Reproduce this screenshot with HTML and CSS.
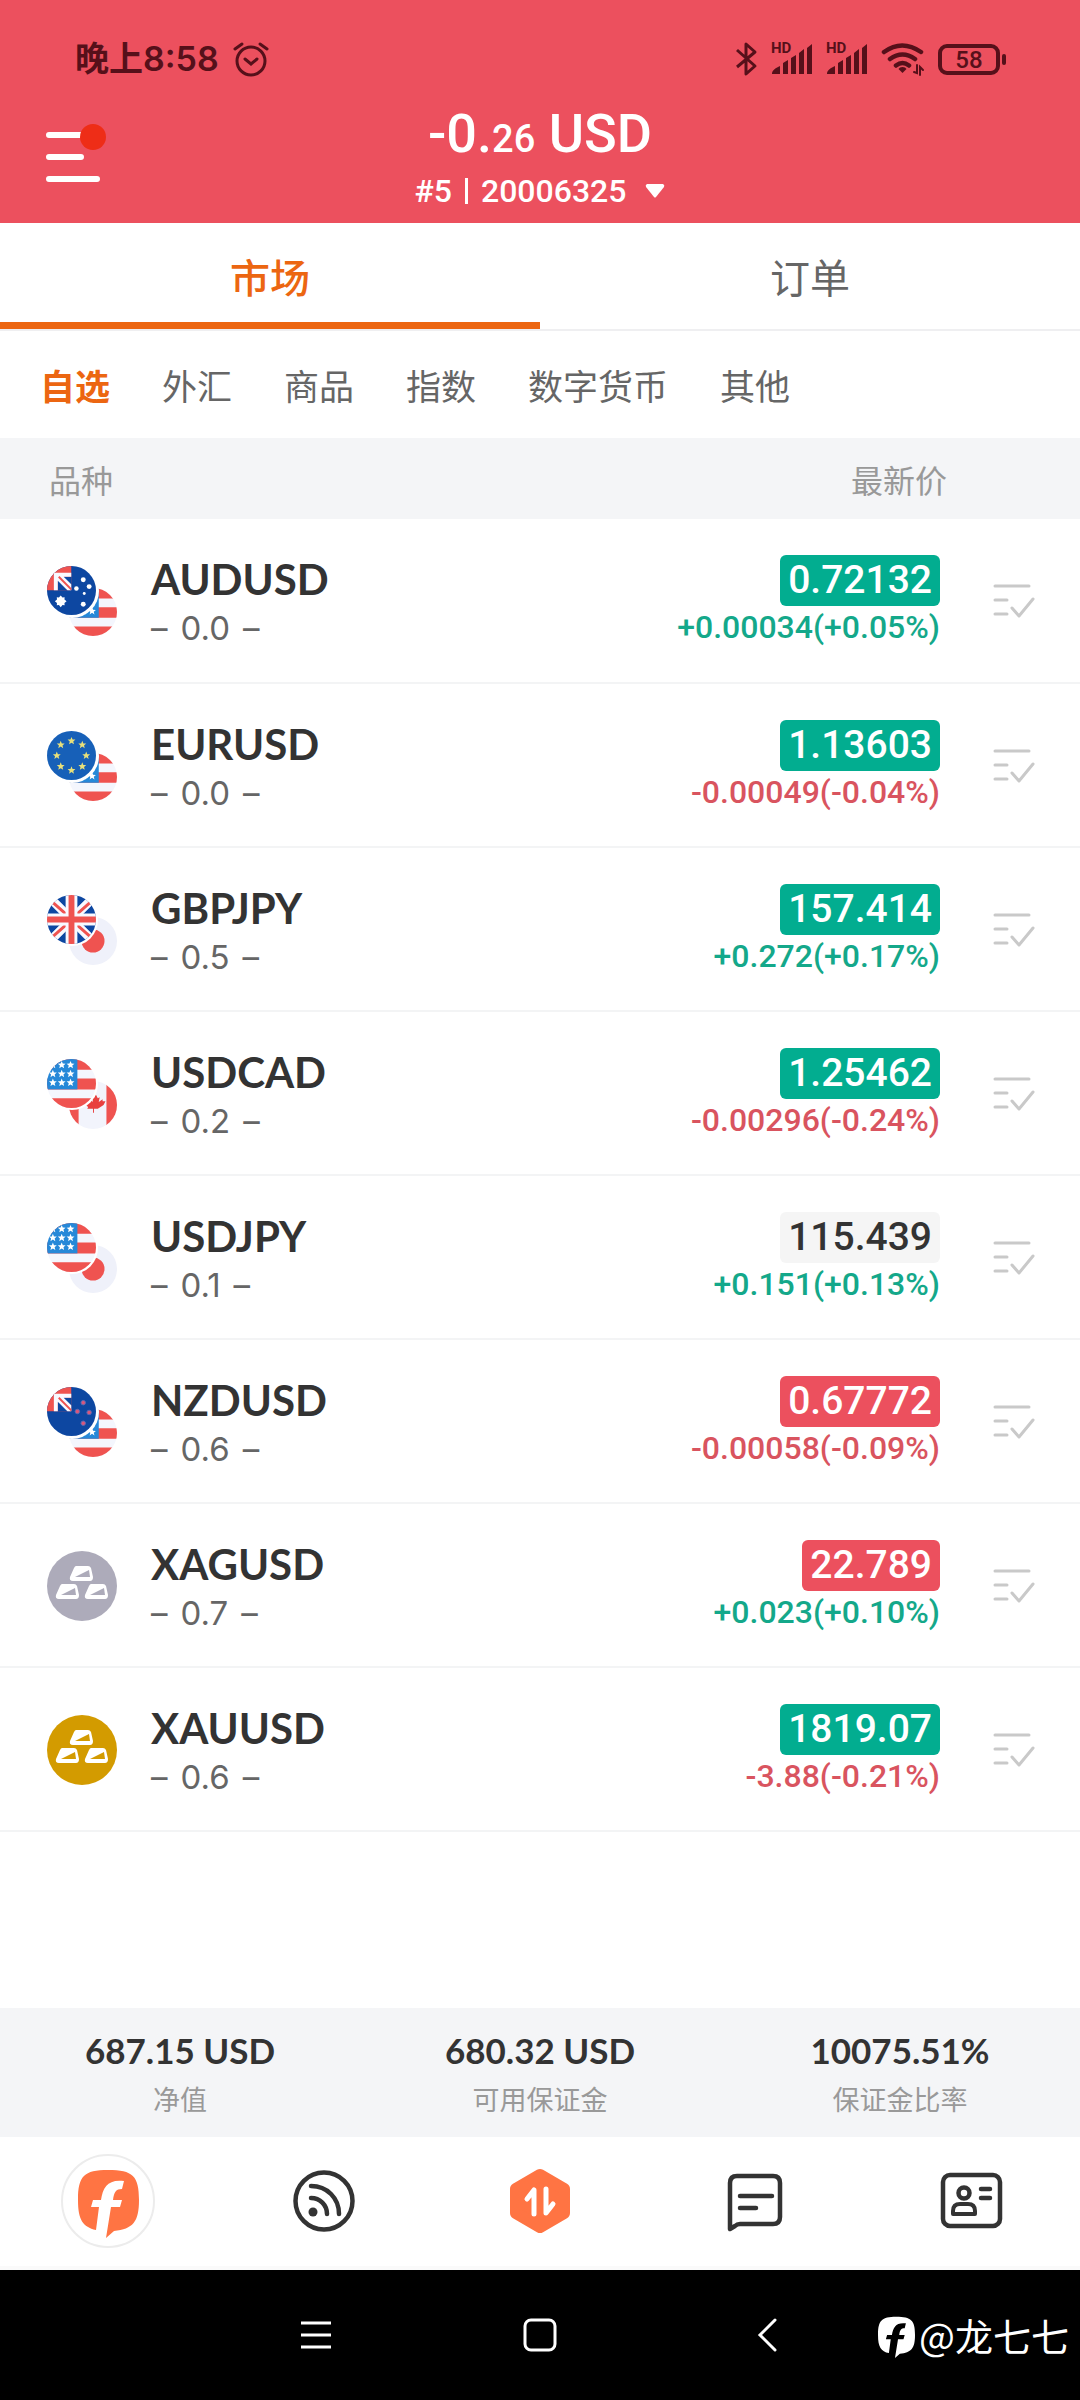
FILE: index.html
```html
<!DOCTYPE html>
<html lang="zh-CN">
<head>
  <meta charset="UTF-8">
  <meta name="viewport" content="width=device-width, initial-scale=1">
  <title>市场</title>
  <link rel="stylesheet" href="styles.css">
</head>
<body>

<!-- shared shapes -->
<svg class="defs" width="0" height="0" aria-hidden="true">
  <defs>
    <clipPath id="round"><circle cx="25" cy="25" r="25"/></clipPath>
    <path id="star" d="M0-4 1.1-1.3 4-1.2 1.8.7 2.5 3.5 0 1.9-2.5 3.5-1.8.7-4-1.2-1.1-1.3Z"/>
    <path id="spark" d="M0-6 1.8-3.8 4-4 3.8-1.8 6 0 3.8 1.8 4 4 1.8 3.8 0 6-1.8 3.8-4 4-3.8 1.8-6 0-3.8-1.8-4-4-1.8-3.8Z"/>
    <path id="ingot" fill-rule="evenodd" d="M6 0h12q2 0 3 2l2 9q0 4-3 4H3q-4 0-3-4L4 2q1-2 2-2zM5 11h15l-1-7z"/>

    <symbol id="usd" viewBox="0 0 50 50">
      <g clip-path="url(#round)">
        <rect width="50" height="50" fill="#f4f6fd"/>
        <path fill="#ef5350" d="M0 0h50v11H0zM0 20h50v11H0zM0 40h50v10H0z"/>
        <rect width="31" height="31" fill="#2688d8"/>
        <g fill="#fff">
          <use href="#star" x="6" y="6"/><use href="#star" x="15" y="6"/><use href="#star" x="24" y="6"/>
          <use href="#star" x="6" y="15"/><use href="#star" x="15" y="15"/><use href="#star" x="24" y="15"/>
          <use href="#star" x="6" y="24"/><use href="#star" x="15" y="24"/><use href="#star" x="24" y="24"/>
        </g>
      </g>
    </symbol>

    <symbol id="union" viewBox="0 0 25 25">
      <path fill="#ef5350" d="M0 0h25v25H0z"/>
      <path fill="#0d47a1" d="M11 11h14v14H11z"/>
      <path fill="#f8f9ff" d="M7 7h18v4H17l8 8v6h-4L11 15v10H7z"/>
      <path stroke="#ef5350" stroke-width="2" d="M12 11 25 24"/>
    </symbol>

    <symbol id="aud" viewBox="0 0 50 50">
      <g clip-path="url(#round)">
        <rect width="50" height="50" fill="#0d47a1"/>
        <use href="#union" width="25" height="25"/>
        <g fill="#fff">
          <use href="#spark" x="14" y="36"/>
          <circle cx="37" cy="14" r="2.5"/><circle cx="43" cy="21" r="2.5"/>
          <circle cx="30" cy="23" r="2.3"/><circle cx="38" cy="28" r="1.5"/><circle cx="37" cy="39" r="2.5"/>
        </g>
      </g>
    </symbol>

    <symbol id="nzd" viewBox="0 0 50 50">
      <g clip-path="url(#round)">
        <rect width="50" height="50" fill="#0d47a1"/>
        <use href="#union" width="25" height="25"/>
        <g fill="#d9577c" stroke="#5a6bb5">
          <circle cx="37" cy="16" r="2.3"/><circle cx="43" cy="26" r="2.3"/>
          <circle cx="31" cy="25" r="2.3"/><circle cx="37" cy="37" r="2.3"/>
        </g>
      </g>
    </symbol>

    <symbol id="eur" viewBox="0 0 50 50">
      <circle cx="25" cy="25" r="25" fill="#1760b8"/>
      <g fill="#e9e07a">
        <use href="#star" x="25" y="10"/><use href="#star" x="36" y="14"/><use href="#star" x="40" y="25"/>
        <use href="#star" x="36" y="36"/><use href="#star" x="25" y="40"/><use href="#star" x="14" y="36"/>
        <use href="#star" x="10" y="25"/><use href="#star" x="14" y="14"/>
      </g>
    </symbol>

    <symbol id="gbp" viewBox="0 0 50 50">
      <g clip-path="url(#round)">
        <rect width="50" height="50" fill="#0d47a1"/>
        <path stroke="#f8f9ff" stroke-width="9" d="M3 3 47 47M47 3 3 47"/>
        <path stroke="#ef5350" stroke-width="3" d="M3 5 20 20M47 5 30 20M3 45 20 30M47 45 30 30"/>
        <path stroke="#f8f9ff" stroke-width="12" d="M25 0v50M0 25h50"/>
        <path stroke="#ef5350" stroke-width="6" d="M25 0v50M0 25h50"/>
      </g>
    </symbol>

    <symbol id="jpy" viewBox="0 0 50 50">
      <circle cx="25" cy="25" r="25" fill="#eff1fa"/>
      <circle cx="25" cy="25" r="12" fill="#ef5350"/>
    </symbol>

    <symbol id="cad" viewBox="0 0 50 50">
      <g clip-path="url(#round)">
        <rect width="50" height="50" fill="#f2f4fc"/>
        <path fill="#ef5350" d="M0 0h10v50H0zM39 0h11v50H39z"/>
        <path fill="#e8403f" d="M28 14l2 4 2-1-1 5 4-3 0 2 3 0-2 4-6 4-4 0 0 4h-1v-4l-6 0 1-2-4-3 2-1 0-3 3 1 1-2 3 3-1-6 2 2z"/>
      </g>
    </symbol>

    <symbol id="ingots" viewBox="0 0 70 70">
      <g fill="#fff">
        <use href="#ingot" x="23" y="15"/><use href="#ingot" x="9" y="33"/><use href="#ingot" x="38" y="33"/>
      </g>
    </symbol>

    <symbol id="check-list" viewBox="0 0 42 36">
      <path fill="none" stroke="#c9c9c9" stroke-width="3" stroke-linecap="round" stroke-linejoin="round" d="M2 3h34M2 17h12M2 31h12M19 25l7 8 14-17"/>
    </symbol>

    <symbol id="brand" viewBox="0 -6 61 74">
      <path fill="currentColor" d="M18 60C5 57 0 50 0 30 0 6 6 0 30 0c25 0 31 6 31 30 0 22-6 29-25 31l-8 7 5-31h9l2-7h-9c1-8 3-11 9-11l2-8c-16-2-21 6-23 19h-8l-2 7h8z"/>
    </symbol>

    <symbol id="signal" viewBox="0 0 42 32">
      <path fill="currentColor" d="M1 31c0-4 4-6 8-8v8zM12 31V20l5-3v14zM20 31V15l5-3v19zM28 31V10l5-4v25zM36 31V5l5-4v30z"/>
    </symbol>
  </defs>
</svg>

<header class="header">
  <div class="status">
    <div class="status-left">
      <span class="clock">晚上8:58</span>
      <svg width="36" height="36" viewBox="0 0 36 36" fill="none" stroke="currentColor" stroke-width="3" stroke-linecap="round" aria-hidden="true">
        <circle cx="18" cy="20" r="14"/>
        <path d="M12 18l6 5 6-5M2 8 9 3M34 8 27 3"/>
      </svg>
    </div>
    <div class="status-right">
      <svg width="22" height="36" viewBox="0 0 22 36" fill="none" stroke="currentColor" stroke-width="3" stroke-linejoin="round" aria-hidden="true">
        <path d="M1 9l18 16-9 8V3l9 8L1 26"/>
      </svg>
      <span class="sim"><b>HD</b><svg width="42" height="32" aria-hidden="true"><use href="#signal"/></svg></span>
      <span class="sim"><b>HD</b><svg width="42" height="32" aria-hidden="true"><use href="#signal"/></svg></span>
      <svg width="44" height="36" viewBox="0 0 44 36" fill="none" stroke="currentColor" stroke-width="4.5" stroke-linecap="round" aria-hidden="true">
        <path d="M3 11q18-13 37 0M9 18q12.500-9 25 0M15 24.500q6.500-5 13 0"/>
        <path fill="currentColor" stroke="none" d="M21.500 26q3 0 4 2l-4 4-4-4q1-2 4-2z"/>
        <path stroke-width="2" d="M33 31l3 1v-8M39 34v-8l3 3"/>
      </svg>
      <span class="battery">58</span>
    </div>
  </div>

  <div class="title-bar">
    <button class="menu" aria-label="菜单">
      <svg width="62" height="60" viewBox="0 0 62 60" aria-hidden="true">
        <path stroke="#fff" stroke-width="6" stroke-linecap="round" d="M4 13h34M4 35h32M4 57h48"/>
        <circle cx="48" cy="15" r="13" fill="#ee2d17"/>
      </svg>
    </button>
    <div class="account">
      <div class="profit">-0.<small>26</small> USD</div>
      <button class="account-id">
        <span>#5</span><i></i><span>20006325</span>
        <svg width="20" height="14" viewBox="0 0 20 14" aria-hidden="true"><path fill="#fff" d="M2 0h16q2 1 1 3l-8 10q-1 1-2 0L1 3Q0 1 2 0z"/></svg>
      </button>
    </div>
  </div>
</header>

<nav class="tabs">
  <button class="active">市场</button>
  <button>订单</button>
</nav>

<nav class="categories">
  <button class="active">自选</button>
  <button>外汇</button>
  <button>商品</button>
  <button>指数</button>
  <button>数字货币</button>
  <button>其他</button>
</nav>

<main class="market">
  <table class="quotes">
    <thead>
      <tr>
        <th class="name">品种</th>
        <th class="price">最新价</th>
        <th class="action"></th>
      </tr>
    </thead>
    <tbody>
      <tr>
        <td class="name">
          <div class="pair">
            <svg class="flags" viewBox="0 0 70 70" aria-hidden="true"><use href="#usd" x="22" y="22" width="48" height="48"/><circle cx="25" cy="25" r="27" fill="#fff"/><use href="#aud" width="49" height="49"/></svg>
            <div><div class="symbol">AUDUSD</div><div class="spread"><span>–</span><span>0.0</span><span>–</span></div></div>
          </div>
        </td>
        <td class="price"><span class="last green">0.72132</span><span class="change up">+0.00034(+0.05%)</span></td>
        <td class="action"><button aria-label="AUDUSD"><svg width="42" height="36" aria-hidden="true"><use href="#check-list"/></svg></button></td>
      </tr>
      <tr>
        <td class="name">
          <div class="pair">
            <svg class="flags" viewBox="0 0 70 70" aria-hidden="true"><use href="#usd" x="22" y="22" width="48" height="48"/><circle cx="25" cy="25" r="27" fill="#fff"/><use href="#eur" width="49" height="49"/></svg>
            <div><div class="symbol">EURUSD</div><div class="spread"><span>–</span><span>0.0</span><span>–</span></div></div>
          </div>
        </td>
        <td class="price"><span class="last green">1.13603</span><span class="change down">-0.00049(-0.04%)</span></td>
        <td class="action"><button aria-label="EURUSD"><svg width="42" height="36" aria-hidden="true"><use href="#check-list"/></svg></button></td>
      </tr>
      <tr>
        <td class="name">
          <div class="pair">
            <svg class="flags" viewBox="0 0 70 70" aria-hidden="true"><use href="#jpy" x="22" y="22" width="48" height="48"/><circle cx="25" cy="25" r="26" fill="#fff"/><use href="#gbp" width="49" height="49"/></svg>
            <div><div class="symbol">GBPJPY</div><div class="spread"><span>–</span><span>0.5</span><span>–</span></div></div>
          </div>
        </td>
        <td class="price"><span class="last green">157.414</span><span class="change up">+0.272(+0.17%)</span></td>
        <td class="action"><button aria-label="GBPJPY"><svg width="42" height="36" aria-hidden="true"><use href="#check-list"/></svg></button></td>
      </tr>
      <tr>
        <td class="name">
          <div class="pair">
            <svg class="flags" viewBox="0 0 70 70" aria-hidden="true"><use href="#cad" x="22" y="22" width="48" height="48"/><circle cx="25" cy="25" r="26" fill="#fff"/><use href="#usd" width="49" height="49"/></svg>
            <div><div class="symbol">USDCAD</div><div class="spread"><span>–</span><span>0.2</span><span>–</span></div></div>
          </div>
        </td>
        <td class="price"><span class="last green">1.25462</span><span class="change down">-0.00296(-0.24%)</span></td>
        <td class="action"><button aria-label="USDCAD"><svg width="42" height="36" aria-hidden="true"><use href="#check-list"/></svg></button></td>
      </tr>
      <tr>
        <td class="name">
          <div class="pair">
            <svg class="flags" viewBox="0 0 70 70" aria-hidden="true"><use href="#jpy" x="22" y="22" width="48" height="48"/><circle cx="25" cy="25" r="26" fill="#fff"/><use href="#usd" width="49" height="49"/></svg>
            <div><div class="symbol">USDJPY</div><div class="spread"><span>–</span><span>0.1</span><span>–</span></div></div>
          </div>
        </td>
        <td class="price"><span class="last">115.439</span><span class="change up">+0.151(+0.13%)</span></td>
        <td class="action"><button aria-label="USDJPY"><svg width="42" height="36" aria-hidden="true"><use href="#check-list"/></svg></button></td>
      </tr>
      <tr>
        <td class="name">
          <div class="pair">
            <svg class="flags" viewBox="0 0 70 70" aria-hidden="true"><use href="#usd" x="22" y="22" width="48" height="48"/><circle cx="25" cy="25" r="27" fill="#fff"/><use href="#nzd" width="49" height="49"/></svg>
            <div><div class="symbol">NZDUSD</div><div class="spread"><span>–</span><span>0.6</span><span>–</span></div></div>
          </div>
        </td>
        <td class="price"><span class="last red">0.67772</span><span class="change down">-0.00058(-0.09%)</span></td>
        <td class="action"><button aria-label="NZDUSD"><svg width="42" height="36" aria-hidden="true"><use href="#check-list"/></svg></button></td>
      </tr>
      <tr>
        <td class="name">
          <div class="pair">
            <svg class="flags" viewBox="0 0 70 70" aria-hidden="true"><circle cx="35" cy="35" r="35" fill="#adabba"/><use href="#ingots"/></svg>
            <div><div class="symbol">XAGUSD</div><div class="spread"><span>–</span><span>0.7</span><span>–</span></div></div>
          </div>
        </td>
        <td class="price"><span class="last red">22.789</span><span class="change up">+0.023(+0.10%)</span></td>
        <td class="action"><button aria-label="XAGUSD"><svg width="42" height="36" aria-hidden="true"><use href="#check-list"/></svg></button></td>
      </tr>
      <tr>
        <td class="name">
          <div class="pair">
            <svg class="flags" viewBox="0 0 70 70" aria-hidden="true"><circle cx="35" cy="35" r="35" fill="#d39b00"/><use href="#ingots"/></svg>
            <div><div class="symbol">XAUUSD</div><div class="spread"><span>–</span><span>0.6</span><span>–</span></div></div>
          </div>
        </td>
        <td class="price"><span class="last green">1819.07</span><span class="change down">-3.88(-0.21%)</span></td>
        <td class="action"><button aria-label="XAUUSD"><svg width="42" height="36" aria-hidden="true"><use href="#check-list"/></svg></button></td>
      </tr>
    </tbody>
  </table>
</main>

<section class="summary">
  <div><strong>687.15 USD</strong><span>净值</span></div>
  <div><strong>680.32 USD</strong><span>可用保证金</span></div>
  <div><strong>10075.51%</strong><span>保证金比率</span></div>
</section>

<nav class="tabbar">
  <a href="#" class="home" aria-label="首页"><svg width="61" height="74" aria-hidden="true"><use href="#brand"/></svg></a>
  <a href="#" aria-label="动态">
    <svg width="64" height="64" viewBox="0 0 64 64" fill="none" stroke="#333" stroke-width="4.5" stroke-linecap="round" aria-hidden="true">
      <circle cx="32" cy="32" r="28.5"/>
      <path d="M19 17c16 0 28 12 28 28M19 29c9 0 16 7 16 16"/>
      <circle cx="21" cy="43" r="4.5" fill="#333" stroke="none"/>
    </svg>
  </a>
  <a href="#" aria-label="交易">
    <svg width="64" height="66" viewBox="0 0 64 66" aria-hidden="true">
      <path fill="#ff7443" stroke="#ff7443" stroke-width="12" stroke-linejoin="round" d="M32 7 56 21v24L32 59 8 45V21z"/>
      <path fill="none" stroke="#fff" stroke-width="5" stroke-linecap="round" stroke-linejoin="round" d="M19 31l7-9v24M38 21v24l7-9"/>
    </svg>
  </a>
  <a href="#" aria-label="消息">
    <svg width="64" height="64" viewBox="0 0 64 64" fill="none" stroke="#333" stroke-width="4.5" stroke-linecap="round" stroke-linejoin="round" aria-hidden="true">
      <path d="M6 60V14q0-7 7-7h36q7 0 7 7v34q0 7-7 7H16q-3 0-5 2zM16 27h32M16 39h16"/>
    </svg>
  </a>
  <a href="#" aria-label="账户">
    <svg width="64" height="64" viewBox="0 0 64 64" fill="none" stroke="#333" stroke-width="4.5" stroke-linejoin="round" aria-hidden="true">
      <rect x="3" y="6" width="57" height="51" rx="7"/>
      <circle cx="24" cy="24" r="5.5"/>
      <path stroke-width="4" d="M13 45v-3q0-7 7-7h8q7 0 7 7v3z"/>
      <path stroke-linecap="round" d="M41 20h9M41 29h9"/>
    </svg>
  </a>
</nav>

<footer class="system">
  <div class="keys">
    <button aria-label="最近任务"><svg width="34" height="34" viewBox="0 0 34 34" fill="none" stroke="#fff" stroke-width="3" aria-hidden="true"><path d="M2 5h30M2 17h30M2 29h30"/></svg></button>
    <button aria-label="主屏幕"><svg width="34" height="34" viewBox="0 0 34 34" fill="none" stroke="#fff" stroke-width="3" aria-hidden="true"><rect x="2" y="2" width="30" height="30" rx="6"/></svg></button>
    <button aria-label="返回"><svg width="34" height="34" viewBox="0 0 34 34" fill="none" stroke="#fff" stroke-width="3" stroke-linecap="round" aria-hidden="true"><path d="M28 2 13 17l15 15"/></svg></button>
  </div>
  <div class="watermark"><svg width="37" height="45" aria-hidden="true"><use href="#brand"/></svg>@龙七七</div>
</footer>

</body>
</html>
```
FILE: styles.css
```css
*,
*::before {
  box-sizing: border-box;
}
body {
  margin: 0;
  min-height: 100vh;
  display: flex;
  flex-direction: column;
  background: #fff;
  color: #333;
  font-family: Roboto, "Noto Sans CJK SC", sans-serif;
}
button {
  padding: 0;
  border: none;
  background: none;
  color: inherit;
  font: inherit;
  cursor: pointer;
}
svg {
  display: block;
  flex: none;
}
.defs {
  position: absolute;
}

/* header */
.header {
  background: #ec505e;
  color: #fff;
  padding-bottom: 12px;
}
.status {
  display: flex;
  justify-content: space-between;
  align-items: center;
  padding: 38px 80px 0 75px;
  height: 80px;
  color: #56101a;
}
.status-left,
.status-right {
  display: flex;
  align-items: center;
}
.status-left {
  gap: 14px;
}
.status-right {
  gap: 13px;
}
.clock {
  font: 600 34px/42px Inter, "Noto Sans CJK SC", sans-serif;
}
.sim {
  position: relative;
}
.sim b {
  position: absolute;
  left: 0;
  top: -3px;
  font-size: 15px;
  line-height: 16px;
}
.battery {
  position: relative;
  width: 62px;
  height: 31px;
  border: 4px solid;
  border-radius: 9px;
  font-size: 24px;
  font-weight: 500;
  line-height: 24px;
  text-align: center;
}
.battery::after {
  content: "";
  position: absolute;
  right: -10px;
  top: 6px;
  width: 4px;
  height: 11px;
  border-radius: 2px;
  background: currentColor;
}
.title-bar {
  display: grid;
  grid-template-columns: 1fr auto 1fr;
  padding: 22px 45px 0;
}
.menu {
  justify-self: start;
  align-self: start;
  margin-top: 20px;
}
.account {
  text-align: center;
}
.profit {
  height: 64px;
  font-size: 54px;
  font-weight: 500;
  line-height: 64px;
}
.profit small {
  font-size: 38px;
  line-height: 38px;
}
.account-id {
  display: flex;
  align-items: center;
  justify-content: center;
  gap: 13px;
  margin: 5px auto 0;
  font-size: 32px;
  font-weight: 500;
  line-height: 40px;
}
.account-id i {
  width: 3px;
  height: 26px;
  background: #fff;
}
.account-id svg {
  margin-left: 6px;
}

/* tabs */
.tabs {
  display: flex;
  height: 108px;
  border-bottom: 2px solid #efeff1;
}
.tabs button {
  flex: 1;
  border-top: 7px solid transparent;
  border-bottom: 7px solid transparent;
  font-size: 40px;
  color: #666;
}
.tabs .active {
  color: #ec6611;
  font-weight: 500;
  border-bottom-color: #ec6611;
}
.categories {
  display: flex;
  align-items: center;
  gap: 52px;
  height: 107px;
  padding: 0 40px;
  font-size: 35px;
  color: #666;
}
.categories .active {
  color: #ec6611;
  font-weight: 700;
}

/* quotes */
.market {
  flex: 1;
}
.quotes {
  width: 100%;
  border-collapse: collapse;
}
.quotes th {
  height: 81px;
  padding: 0;
  background: #f4f5f7;
  color: #999;
  font-size: 32px;
  font-weight: 400;
}
.quotes td {
  height: 164px;
  padding: 36px 0 0;
  border-bottom: 2px solid #f3f4f5;
  vertical-align: top;
}
.quotes .name {
  text-align: left;
}
.quotes .price {
  text-align: right;
}
.quotes .action {
  width: 133px;
}
.quotes th.name {
  padding-left: 49px;
}
.quotes td.name {
  padding-left: 47px;
}
.quotes td.price {
  padding-right: 7px;
}
.pair {
  display: flex;
  gap: 34px;
}
.flags {
  width: 70px;
  height: 70px;
  margin-top: 11px;
}
.symbol {
  font: 700 42px/48px Lato, sans-serif;
}
.spread {
  display: flex;
  gap: 13px;
  font: 400 33px/50px Inter, sans-serif;
  color: #666;
}
.last,
.change {
  display: block;
  width: fit-content;
  margin-left: auto;
}
.last {
  padding: 0 8px;
  border-radius: 6px;
  background: #f5f5f5;
  font-size: 39px;
  font-weight: 500;
  line-height: 51px;
}
.last.green {
  background: #02ad90;
  color: #fff;
}
.last.red {
  background: #ec505e;
  color: #fff;
}
.change {
  font-size: 32px;
  font-weight: 500;
  line-height: 42px;
}
.up {
  color: #14a88a;
}
.down {
  color: #d9545f;
}
.quotes td.action button {
  display: block;
  margin: 28px 0 0 46px;
}

/* account totals */
.summary {
  display: flex;
  height: 129px;
  padding-top: 20px;
  background: #f4f5f7;
  text-align: center;
}
.summary div {
  flex: 1;
}
.summary strong {
  display: block;
  font: 700 35px/44px Lato, sans-serif;
}
.summary span {
  display: block;
  font-size: 27px;
  line-height: 58px;
  color: #999;
}

/* bottom navigation */
.tabbar {
  display: flex;
  height: 133px;
  padding-bottom: 2px;
  border-bottom: 4px solid #fafafa;
}
.tabbar a {
  flex: 1;
  display: flex;
  align-items: center;
  justify-content: center;
}
.tabbar .home {
  color: #ff7443;
}
.tabbar .home::before {
  content: "";
  position: absolute;
  width: 94px;
  height: 94px;
  border: 2px solid #ececec;
  border-radius: 50%;
}
.system {
  position: relative;
  height: 130px;
  background: #000;
  color: #fff;
}
.keys {
  display: flex;
  justify-content: center;
  align-items: center;
  gap: 190px;
  height: 130px;
}
.watermark {
  position: absolute;
  right: 11px;
  top: 38px;
  display: flex;
  align-items: center;
  gap: 4px;
  font: 400 38px/54px "Noto Sans CJK SC", sans-serif;
}
```
